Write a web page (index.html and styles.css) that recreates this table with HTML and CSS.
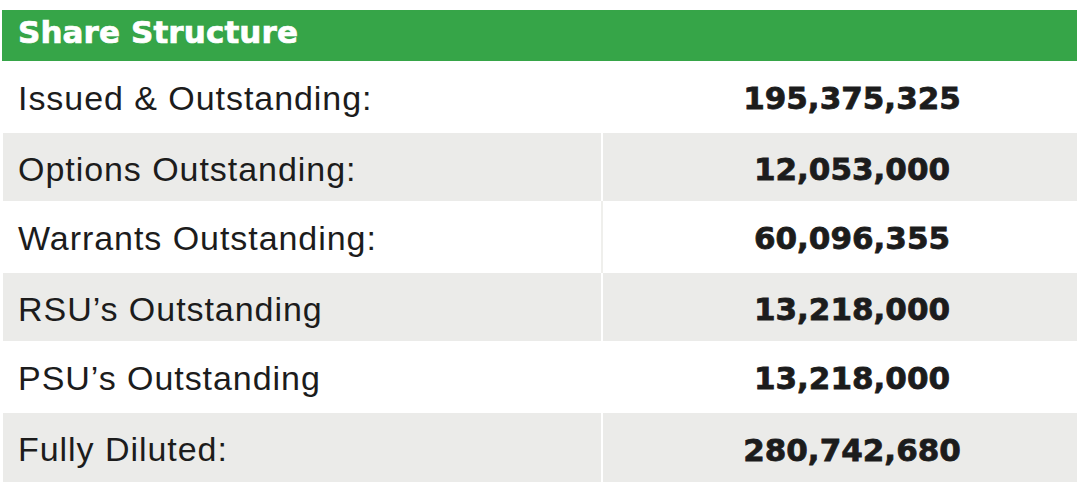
FILE: index.html
```html
<!DOCTYPE html>
<html lang="en">
<head>
<meta charset="utf-8">
<title>Share Structure</title>
<link rel="stylesheet" href="styles.css">
</head>
<body>
<section class="share-table">
  <header class="share-table__head">Share Structure</header>
  <div class="row row--white">
    <div class="cell cell--label">Issued &amp; Outstanding:</div>
    <div class="cell cell--value">195,375,325</div>
  </div>
  <div class="row row--grey">
    <div class="cell cell--label">Options Outstanding:</div>
    <div class="cell cell--value">12,053,000</div>
  </div>
  <div class="row row--white row--rule">
    <div class="cell cell--label">Warrants Outstanding:</div>
    <div class="cell cell--value">60,096,355</div>
  </div>
  <div class="row row--grey">
    <div class="cell cell--label">RSU’s Outstanding</div>
    <div class="cell cell--value">13,218,000</div>
  </div>
  <div class="row row--white">
    <div class="cell cell--label">PSU’s Outstanding</div>
    <div class="cell cell--value">13,218,000</div>
  </div>
  <div class="row row--grey row--last">
    <div class="cell cell--label">Fully Diluted:</div>
    <div class="cell cell--value">280,742,680</div>
  </div>
</section>
</body>
</html>
```

FILE: styles.css
```css
html, body {
  margin: 0;
  padding: 0;
  background: #ffffff;
}

.share-table {
  margin: 10px 3px 0 2px;
  display: flex;
  flex-direction: column;
}

.share-table__head {
  height: 51px;
  box-sizing: border-box;
  background: #36a548;
  color: #ffffff;
  font-family: "DejaVu Sans", sans-serif;
  font-weight: bold;
  font-size: 31px;
  line-height: 44px;
  padding-left: 16px;
  letter-spacing: 0.1px;
  -webkit-text-stroke: 0.7px #ffffff;
}

.row {
  display: grid;
  grid-template-columns: 598px 1fr;
  column-gap: 2px;
  margin-left: 1px;
}

.row--white {
  height: 72px;
  background: #ffffff;
}

.row--rule {
  background: #efefec;
}

.row--grey {
  height: 68px;
  background: #ffffff;
}

.row--last {
  height: 69px;
}

.cell {
  display: flex;
  align-items: center;
  color: #1c1c1c;
}

.row--white .cell {
  background: #ffffff;
}

.row--grey .cell {
  background: #ebebe9;
}

.cell--label {
  padding-left: 15px;
  font-family: "Liberation Sans", Arial, sans-serif;
  font-size: 34px;
  letter-spacing: 0.95px;
  padding-top: 2px;
}

.row--grey .cell--label,
.row--grey .cell--value {
  padding-top: 4px;
}

.cell--value {
  justify-content: center;
  padding-left: 24px;
  font-family: "DejaVu Sans", sans-serif;
  font-weight: bold;
  font-size: 31px;
  padding-top: 2px;
  -webkit-text-stroke: 0.8px #1c1c1c;
}
```
